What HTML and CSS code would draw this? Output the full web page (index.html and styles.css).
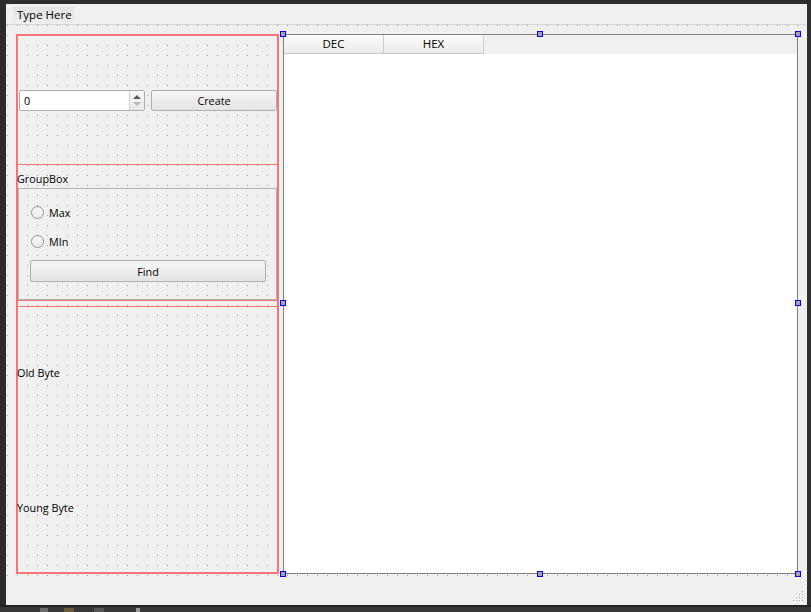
FILE: index.html
```html
<!DOCTYPE html>
<html>
<head>
<meta charset="utf-8">
<link rel="stylesheet" href="styles.css">
</head>
<body>
<div class="frame">
  <div class="topdark"></div>
  <div class="mid">
    <div class="leftdark"></div>
    <div class="form">
      <div class="menubar"><span class="menuitem">Type Here</span></div>
      <div class="canvas">
        <div class="row">
          <div class="leftbox">
            <div class="sec1">
              <div class="spinbox">
                <span class="spinval">0</span>
                <span class="spinbtns">
                  <svg width="14" height="19" viewBox="0 0 14 19"><path d="M3 8 L7 4 L11 8 Z" fill="#5a5a5a"/><path d="M3 11 L7 15 L11 11 Z" fill="#b8b8b8"/></svg>
                </span>
              </div>
              <div class="btn create">Create</div>
            </div>
            <div class="sec2">
              <div class="gtitle">GroupBox</div>
              <div class="gframe">
                <div class="radio r1"><span class="circle"></span><span>Max</span></div>
                <div class="radio r2"><span class="circle"></span><span>MIn</span></div>
                <div class="btn find">Find</div>
              </div>
            </div>
            <div class="sec3">
              <div class="lbl old">Old Byte</div>
              <div class="lbl young">Young Byte</div>
            </div>
          </div>
          <div class="table">
            <div class="thead">
              <div class="th">DEC</div>
              <div class="th">HEX</div>
            </div>
            <div class="tbody"></div>
          </div>
        </div>
        <span class="handle h1"></span>
        <span class="handle h2"></span>
        <span class="handle h3"></span>
        <span class="handle h4"></span>
        <span class="handle h5"></span>
        <span class="handle h6"></span>
        <span class="handle h7"></span>
        <span class="handle h8"></span>
      </div>
      <div class="status">
        <svg class="grip" width="12" height="12" viewBox="0 0 12 12">
          <g fill="#a8a8a8">
            <rect x="9" y="0" width="1" height="1"/>
            <rect x="6" y="3" width="1" height="1"/><rect x="9" y="3" width="1" height="1"/>
            <rect x="3" y="6" width="1" height="1"/><rect x="6" y="6" width="1" height="1"/><rect x="9" y="6" width="1" height="1"/>
            <rect x="0" y="9" width="1" height="1"/><rect x="3" y="9" width="1" height="1"/><rect x="6" y="9" width="1" height="1"/><rect x="9" y="9" width="1" height="1"/>
          </g>
        </svg>
      </div>
    </div>
    <div class="rightdark"></div>
  </div>
  <div class="bottomdark">
    <span class="ico i1"></span>
    <span class="ico i2"></span>
    <span class="ico i3"></span>
    <span class="ico i4"></span>
  </div>
</div>
</body>
</html>
```
FILE: styles.css
```css
html, body {
  margin: 0;
  padding: 0;
  background: #2b2b2b;
  font-family: "Open Sans", "Liberation Sans", sans-serif;
  font-size: 10.8px;
  color: #000;
}
.frame {
  width: 811px;
  height: 612px;
  display: flex;
  flex-direction: column;
  overflow: hidden;
}
.topdark { height: 4px; background: #2d2d2d; }
.mid { height: 601px; display: flex; }
.leftdark { width: 6px; background: #2b2b2b; }
.rightdark { width: 4px; background: #303030; }
.form {
  width: 801px;
  background: #f0f0f0;
  display: flex;
  flex-direction: column;
}
.menubar {
  height: 20px;
  border-bottom: 1px solid #d6d6d6;
  display: flex;
  align-items: flex-start;
}
.menuitem {
  margin-top: 3px;
  margin-left: 7px;
  height: 16px;
  width: 61px;
  box-sizing: border-box;
  padding-left: 4px;
  line-height: 15px;
  font-size: 11.5px;
  background: linear-gradient(#e3e3e3, #ededed);
}
.canvas {
  height: 553px;
  box-sizing: border-box;
  position: relative;
  padding: 9px 0 0 10px;
  background-color: #f0f0f0;
  background-image: conic-gradient(at 1px 1px, transparent 270deg, #9c9c9c 0);
  background-size: 10px 10px;
  background-position: 1px 0;
}
.status {
  flex: 1;
  position: relative;
}
.row { display: flex; }
.leftbox {
  width: 263px;
  height: 540px;
  box-sizing: border-box;
  border: 2px solid #f77474;
  display: flex;
  flex-direction: column;
}
.sec1 {
  height: 129px;
  box-sizing: border-box;
  border-bottom: 1px solid #f77474;
  display: flex;
  align-items: flex-start;
  padding: 54px 0 0 1px;
  gap: 6px;
}
.spinbox {
  width: 126px;
  height: 21px;
  box-sizing: border-box;
  border: 1px solid #adadad;
  border-radius: 2px;
  background: #fff;
  display: flex;
}
.spinval { flex: 1; padding-left: 4px; line-height: 19px; }
.spinbtns {
  width: 14px;
  border-left: 1px solid #d0d0d0;
  background: linear-gradient(#f7f7f7, #e8e8e8);
  display: flex;
}
.btn {
  box-sizing: border-box;
  border: 1px solid #adadad;
  border-radius: 2px;
  background: linear-gradient(#f6f6f6, #e4e4e4);
  display: flex;
  align-items: center;
  justify-content: center;
}
.create { width: 126px; height: 21px; }
.sec2 {
  height: 136px;
  box-sizing: border-box;
  border-bottom: 1px solid #f77474;
  padding-top: 7px;
  display: flex;
  flex-direction: column;
}
.gtitle { height: 14px; line-height: 14px; margin-left: -1px; margin-bottom: 2px; }
.gframe {
  height: 112px;
  box-sizing: border-box;
  border: 1px solid #b4b4b4;
  padding: 0 10px 0 11px;
  display: flex;
  flex-direction: column;
}
.radio { display: flex; align-items: center; gap: 5px; height: 13px; padding-left: 1px; }
.r1 { margin-top: 17px; }
.r2 { margin-top: 16px; }
.circle {
  width: 13px;
  height: 13px;
  box-sizing: border-box;
  border: 1px solid #959595;
  border-radius: 50%;
  background: linear-gradient(#f8f8f8, #ececec);
}
.find { margin-top: 12px; height: 22px; }
.sec3 {
  margin-top: 5px;
  flex: 1;
  border-top: 1px solid #f77474;
  display: flex;
  flex-direction: column;
}
.lbl { height: 14px; line-height: 14px; margin-left: -1px; }
.old { margin-top: 59px; }
.young { margin-top: 121px; }
.table {
  margin-left: 4px;
  width: 515px;
  height: 540px;
  box-sizing: border-box;
  border: 1px solid #7f7f7f;
  display: flex;
  flex-direction: column;
}
.thead {
  height: 19px;
  background: #f0f0f0;
  display: flex;
}
.th {
  width: 100px;
  box-sizing: border-box;
  border-right: 1px solid #cdcdcd;
  border-bottom: 1px solid #c8c8c8;
  background: linear-gradient(#fbfbfb, #ebebeb);
  text-align: center;
  line-height: 18px;
  font-size: 11.5px;
}
.tbody { flex: 1; background: #fff; }
.handle {
  position: absolute;
  width: 6px;
  height: 6px;
  box-sizing: border-box;
  border: 1px solid #0000ff;
  background: #a3a3b0;
}
.h1 { left: 274px; top: 6px; }
.h2 { left: 531px; top: 6px; }
.h3 { left: 789px; top: 6px; }
.h4 { left: 274px; top: 275px; }
.h5 { left: 789px; top: 275px; }
.h6 { left: 274px; top: 546px; }
.h7 { left: 531px; top: 546px; }
.h8 { left: 789px; top: 546px; }
.grip { position: absolute; right: 2px; bottom: 2px; }
.bottomdark {
  height: 7px;
  background: linear-gradient(#222 0, #222 2px, #383838 2px);
  display: flex;
  align-items: flex-end;
}
.ico { height: 4px; background: #6a6a6a; display: block; }
.i1 { margin-left: 40px; width: 8px; }
.i2 { margin-left: 16px; width: 10px; background: #6b5a3a; }
.i3 { margin-left: 20px; width: 10px; background: #555; }
.i4 { margin-left: 32px; width: 4px; background: #999; }
```
